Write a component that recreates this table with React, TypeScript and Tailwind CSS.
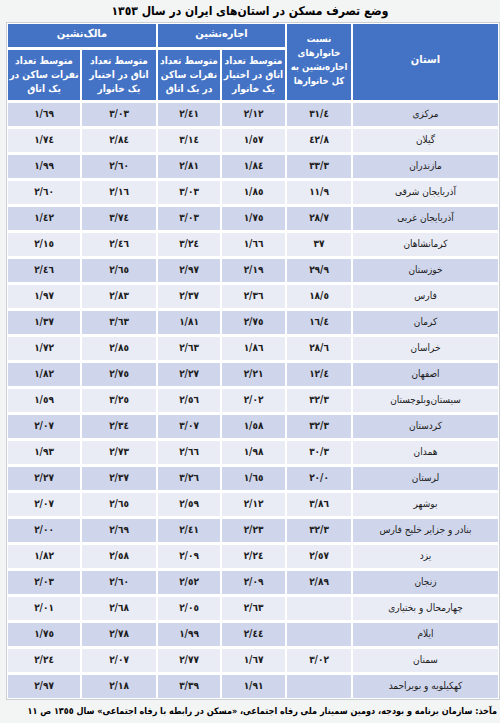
const rows: [string, string, string, string, string, string][] = [
  ['مرکزی', '٣١/٤', '٢/١٢', '٢/٤١', '٣/٠٣', '١/٦٩'],
  ['گیلان', '٤٢/٨', '١/٥٧', '٣/١٤', '٢/٨٤', '١/٧٤'],
  ['مازندران', '٣٣/٣', '١/٨٤', '٢/٨١', '٢/٦٠', '١/٩٩'],
  ['آذربایجان شرقی', '١١/٩', '١/٨٥', '٣/٠٣', '٢/١٦', '٢/٦٠'],
  ['آذربایجان غربی', '٢٨/٧', '١/٧٥', '٣/٠٣', '٣/٧٤', '١/٤٢'],
  ['کرمانشاهان', '٣٧', '١/٦٦', '٣/٢٤', '٢/٤٦', '٢/١٥'],
  ['خوزستان', '٢٩/٩', '٢/١٩', '٢/٩٧', '٢/٦٥', '٢/٤٦'],
  ['فارس', '١٨/٥', '٢/٣٦', '٢/٣٧', '٢/٨٣', '١/٩٧'],
  ['کرمان', '١٦/٤', '٢/٧٥', '١/٨١', '٣/٦٣', '١/٣٧'],
  ['خراسان', '٢٨/٦', '١/٨٦', '٢/٦٣', '٢/٨٥', '١/٧٢'],
  ['اصفهان', '١٢/٤', '٢/٢١', '٢/٢٧', '٢/٧٥', '١/٨٢'],
  ['سیستان‌وبلوچستان', '٣٢/٣', '٢/٠٢', '٢/٥٦', '٣/٢٥', '١/٥٩'],
  ['کردستان', '٣٢/٣', '١/٥٨', '٣/٠٧', '٢/٣٤', '٢/٠٧'],
  ['همدان', '٣٠/٣', '١/٩٨', '٢/٦٦', '٢/٧٣', '١/٩٣'],
  ['لرستان', '٢٠/٠', '١/٦٥', '٣/٢٦', '٢/٣٧', '٢/٢٧'],
  ['بوشهر', '٣/٨٦', '٢/١٢', '٢/٥٩', '٢/٦٥', '٢/٠٧'],
  ['بنادر و جزایر خلیج فارس', '٣٢/٣', '٢/٢٣', '٢/٤١', '٢/٦٩', '٢/٠٠'],
  ['یزد', '٢/٥٧', '٢/٢٤', '٢/٠٩', '٢/٥٨', '١/٨٢'],
  ['زنجان', '٢/٨٩', '٢/٠٩', '٢/٥٢', '٢/٦٠', '٢/٠٣'],
  ['چهارمحال و بختیاری', '', '٢/٦٣', '٢/٠٥', '٢/٦٨', '٢/٠١'],
  ['ایلام', '', '٢/٤٤', '١/٩٩', '٢/٧٨', '١/٧٥'],
  ['سمنان', '٣/٠٢', '١/٦٧', '٢/٧٧', '٢/٠٧', '٢/٢٤'],
  ['کهکیلویه و بویراحمد', '', '١/٩١', '٣/٣٩', '٢/١٨', '٢/٩٧'],
];

const HeadCell = ({ children, className = '' }: { children: React.ReactNode; className?: string }) => (
  <div className={`bg-[#4472c4] text-white font-bold flex justify-center text-center ${className}`}>
    {children}
  </div>
);

export default function App() {
  return (
    <div dir="rtl" className="w-[500px] h-[723px] bg-[#f3f4f4] font-['DejaVu_Sans_Condensed','DejaVu_Sans',sans-serif] text-[#1c1c1c] flex flex-col">
      {/* عنوان */}
      <h1 className="h-[22px] pt-[4px] text-center text-[12px] leading-[15px] font-bold text-black">
        وضع تصرف مسکن در استان‌های ایران در سال ١٣٥٣
      </h1>

      {/* جدول */}
      <div className="ml-[4px] w-[494px] border border-[#c9cfd3] bg-white p-[1px]">
        <div className="grid grid-cols-[145px_64px_63px_62px_74px_72px] gap-x-[2px] gap-y-[3px]">
          <HeadCell className="row-span-2 items-center text-[11px] pb-[4px]">استان</HeadCell>
          <HeadCell className="row-span-2 items-center text-[9.5px] leading-[14px] pb-[4px]">
            نسبت
            <br />
            خانوارهای
            <br />
            اجاره‌نشین به
            <br />
            کل خانوارها
          </HeadCell>
          <HeadCell className="col-span-2 h-[23px] items-start pt-[3px] text-[11px] leading-[13px]">اجاره‌نشین</HeadCell>
          <HeadCell className="col-span-2 h-[23px] items-start pt-[3px] text-[11px] leading-[13px]">مالک‌نشین</HeadCell>
          <HeadCell className="h-[50px] items-center text-[10px] leading-[14px]">متوسط تعداد اتاق در اختیار یک خانوار</HeadCell>
          <HeadCell className="h-[50px] items-center text-[10px] leading-[14px]">متوسط تعداد نفرات ساکن در یک اتاق</HeadCell>
          <HeadCell className="h-[50px] items-center text-[10px] leading-[14px]">متوسط تعداد اتاق در اختیار یک خانوار</HeadCell>
          <HeadCell className="h-[50px] items-center text-[10px] leading-[14px]">متوسط تعداد نفرات ساکن در یک اتاق</HeadCell>

          {rows.map((row, i) =>
            row.map((cell, j) => (
              <div
                key={`${i}-${j}`}
                className={`h-[23px] flex items-center justify-center pb-[2px] ${
                  i % 2 === 0 ? 'bg-[#cfd5ea]' : 'bg-[#e9ebf5]'
                } ${j === 0 ? 'text-[10px]' : 'text-[10px] font-bold'}`}
              >
                {cell}
              </div>
            ))
          )}
        </div>
      </div>

      {/* مأخذ */}
      <p className="mt-[4px] pr-[3px] whitespace-nowrap text-[9px] leading-[14px] font-bold text-black">
        مآخذ: سازمان برنامه و بودجه، دومین سمینار ملی رفاه اجتماعی، «مسکن در رابطه با رفاه اجتماعی» سال ١٣٥٥ ص ١١
      </p>
    </div>
  );
}
